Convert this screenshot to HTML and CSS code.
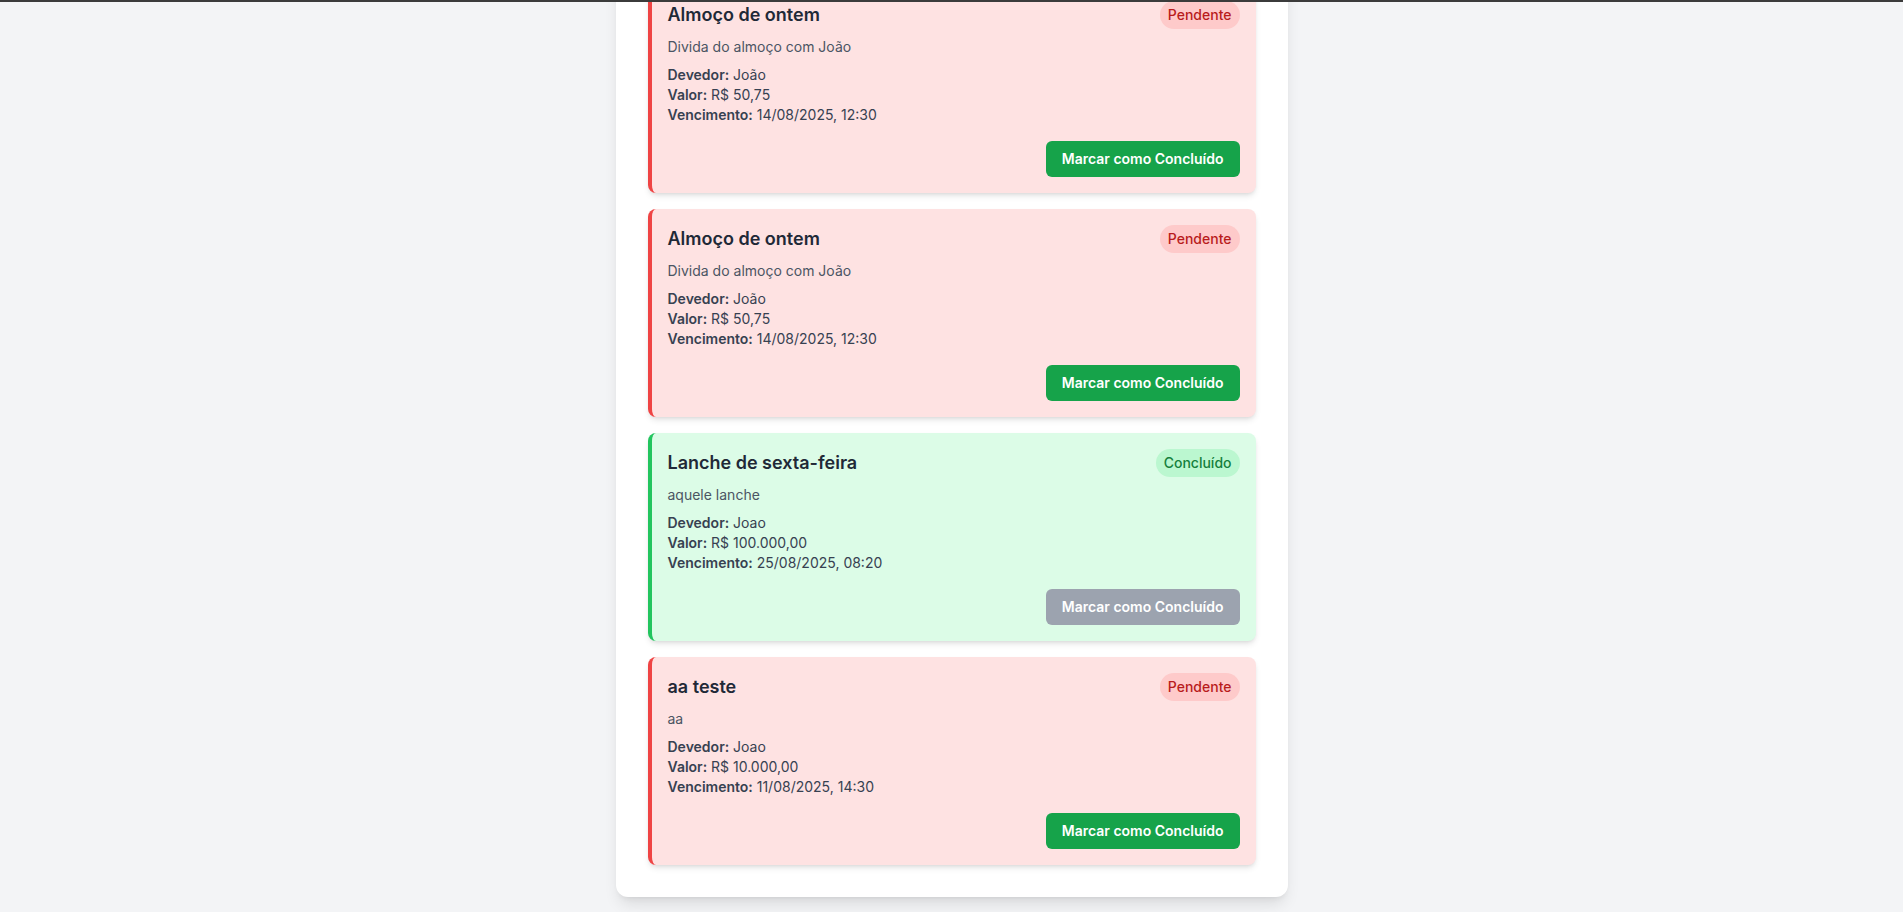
FILE: index.html
```html
<!DOCTYPE html>
<html lang="pt-BR">
<head>
<meta charset="utf-8">
<title>Dívidas</title>
<link rel="stylesheet" href="styles.css">
</head>
<body>
<div class="topbar"></div>
<main class="panel">
  <section class="list">
    <article class="card card--pending">
      <div class="card__head">
        <h3 class="card__title">Almoço de ontem</h3>
        <span class="badge badge--pending">Pendente</span>
      </div>
      <p class="card__desc">Divida do almoço com João</p>
      <div class="card__details">
        <p><strong>Devedor:</strong> João</p>
        <p><strong>Valor:</strong> R$ 50,75</p>
        <p><strong>Vencimento:</strong> 14/08/2025, 12:30</p>
      </div>
      <div class="card__actions"><button class="btn">Marcar como Concluído</button></div>
    </article>
    <article class="card card--pending">
      <div class="card__head">
        <h3 class="card__title">Almoço de ontem</h3>
        <span class="badge badge--pending">Pendente</span>
      </div>
      <p class="card__desc">Divida do almoço com João</p>
      <div class="card__details">
        <p><strong>Devedor:</strong> João</p>
        <p><strong>Valor:</strong> R$ 50,75</p>
        <p><strong>Vencimento:</strong> 14/08/2025, 12:30</p>
      </div>
      <div class="card__actions"><button class="btn">Marcar como Concluído</button></div>
    </article>
    <article class="card card--done">
      <div class="card__head">
        <h3 class="card__title">Lanche de sexta-feira</h3>
        <span class="badge badge--done">Concluído</span>
      </div>
      <p class="card__desc">aquele lanche</p>
      <div class="card__details">
        <p><strong>Devedor:</strong> Joao</p>
        <p><strong>Valor:</strong> R$ 100.000,00</p>
        <p><strong>Vencimento:</strong> 25/08/2025, 08:20</p>
      </div>
      <div class="card__actions"><button class="btn btn--disabled" disabled>Marcar como Concluído</button></div>
    </article>
    <article class="card card--pending">
      <div class="card__head">
        <h3 class="card__title">aa teste</h3>
        <span class="badge badge--pending">Pendente</span>
      </div>
      <p class="card__desc">aa</p>
      <div class="card__details">
        <p><strong>Devedor:</strong> Joao</p>
        <p><strong>Valor:</strong> R$ 10.000,00</p>
        <p><strong>Vencimento:</strong> 11/08/2025, 14:30</p>
      </div>
      <div class="card__actions"><button class="btn">Marcar como Concluído</button></div>
    </article>
  </section>
</main>
</body>
</html>
```
FILE: styles.css
```css
* { box-sizing: border-box; }
html, body { margin: 0; padding: 0; }
body {
  background: #f3f4f6;
  font-family: Inter, "Noto Sans", "Liberation Sans", sans-serif;
  color: #1f2937;
}
.topbar {
  position: fixed;
  top: 0; left: 0; right: 0;
  height: 2px;
  background: #3b3b3b;
  z-index: 10;
}
.panel {
  max-width: 672px;
  margin: -47px auto 15px;
  background: #ffffff;
  border-radius: 12px;
  padding: 32px;
  box-shadow: 0 10px 15px -3px rgba(0,0,0,0.1), 0 4px 6px -4px rgba(0,0,0,0.1);
}
.list {
  display: flex;
  flex-direction: column;
  gap: 16px;
}
.card {
  border-left: 4px solid;
  border-radius: 8px;
  padding: 16px;
  box-shadow: 0 4px 6px -1px rgba(0,0,0,0.1), 0 2px 4px -2px rgba(0,0,0,0.1);
}
.card--pending { background: #fee2e2; border-left-color: #ef4444; }
.card--done { background: #dcfce7; border-left-color: #22c55e; }
.card__head {
  display: flex;
  justify-content: space-between;
  align-items: center;
  margin-bottom: 8px;
}
.card__title {
  margin: 0;
  font-size: 18px;
  line-height: 28px;
  font-weight: 600;
  color: #1f2937;
}
.badge {
  font-size: 14px;
  line-height: 20px;
  padding: 4px 8px;
  border-radius: 9999px;
  font-weight: 500;
}
.badge--pending { background: #fecaca; color: #b91c1c; }
.badge--done { background: #bbf7d0; color: #15803d; }
.card__desc {
  margin: 0 0 8px;
  font-size: 14px;
  line-height: 20px;
  color: #4b5563;
}
.card__details p {
  margin: 0;
  font-size: 14px;
  line-height: 20px;
  color: #374151;
}
.card__details strong { font-weight: 600; }
.card__actions {
  display: flex;
  justify-content: flex-end;
  margin-top: 16px;
}
.btn {
  font-family: inherit;
  font-size: 14px;
  line-height: 20px;
  font-weight: 600;
  color: #ffffff;
  background: #16a34a;
  border: none;
  border-radius: 6px;
  padding: 8px 16px;
  cursor: pointer;
}
.btn--disabled { background: #9ca3af; cursor: not-allowed; }
```
